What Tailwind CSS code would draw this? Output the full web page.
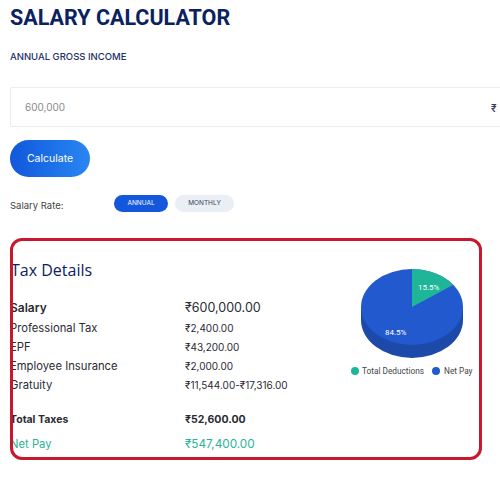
<!DOCTYPE html>
<html lang="en">
<head>
  <meta charset="UTF-8" />
  <title>Salary Calculator</title>
  <script src="https://cdn.jsdelivr.net/npm/@tailwindcss/browser@4"></script>
</head>
<body class="relative w-[500px] h-[477px] overflow-hidden bg-white font-['Inter',sans-serif] text-[#2b2b33]">

  <main class="pl-[10px] pt-[5px]">
    <h1 class="h-[26px] text-[21.5px] leading-[26px] font-bold font-['Roboto',sans-serif] text-[#0b2260]">SALARY CALCULATOR</h1>
    <p class="mt-[19px] h-[14px] text-[9.5px] leading-[14px] font-medium text-[#1c2f66]">ANNUAL GROSS INCOME</p>

    <!-- Income input -->
    <div class="mt-[23px] w-[500px] h-[40px] border border-[#ececec] rounded-[2px] flex items-center pl-[14px] text-[10px] text-[#8a8a8a]">
      600,000
      <span class="absolute left-[491px] top-[102px] text-[10px] leading-[12px] font-semibold text-[#3a3a5a]">₹</span>
    </div>

    <button class="mt-[13px] block w-[80px] h-[37px] rounded-full bg-gradient-to-r from-[#1257dc] to-[#2a86f2] text-white text-[10.5px]">Calculate</button>

    <!-- Salary rate -->
    <div class="mt-[18px] flex items-center h-[17px]">
      <span class="w-[104px] pt-[6px] text-[9.5px] text-[#444]">Salary Rate:</span>
      <span class="w-[54px] h-[17px] rounded-full bg-[#1257dc] text-white text-[6.5px] flex items-center justify-center">ANNUAL</span>
      <span class="ml-[7px] w-[59px] h-[17px] rounded-full bg-[#eaeef5] text-[#3a3f55] text-[6.5px] flex items-center justify-center">MONTHLY</span>
    </div>

    <!-- Tax details -->
    <section class="mt-[47px] flex">
      <div class="w-[330px]">
        <h2 class="h-[22px] pl-[1px] text-[16px] leading-[22px] font-['Open_Sans',sans-serif] text-[#0b2260]">Tax Details</h2>
        <div class="mt-[17px] grid grid-cols-[175px_165px] items-center">
          <div class="h-[21px] leading-[20px] text-[12px] font-semibold">Salary</div>
          <div class="h-[21px] leading-[20px] text-[12.5px]">₹600,000.00</div>
          <div class="h-[19px] leading-[19px] text-[11.25px]">Professional Tax</div>
          <div class="h-[19px] leading-[19px] text-[10px]">₹2,400.00</div>
          <div class="h-[19px] leading-[19px] text-[11.25px]">EPF</div>
          <div class="h-[19px] leading-[19px] text-[10px]">₹43,200.00</div>
          <div class="h-[19px] leading-[19px] text-[11.25px]">Employee Insurance</div>
          <div class="h-[19px] leading-[19px] text-[10px]">₹2,000.00</div>
          <div class="h-[19px] leading-[19px] text-[11.25px]">Gratuity</div>
          <div class="h-[19px] leading-[19px] text-[10px]">₹11,544.00-₹17,316.00</div>
          <div class="mt-[15px] h-[19px] leading-[19px] text-[10.5px] font-bold">Total Taxes</div>
          <div class="mt-[15px] h-[19px] leading-[19px] text-[10.5px] font-bold">₹52,600.00</div>
          <div class="mt-[5px] h-[20px] leading-[20px] text-[11.25px] text-[#2bb39a]">Net Pay</div>
          <div class="mt-[5px] h-[20px] leading-[20px] text-[11.75px] text-[#2bb39a]">₹547,400.00</div>
        </div>
      </div>

      <!-- Pie chart -->
      <div class="w-[140px] mt-[9px]">
        <svg width="140" height="96" viewBox="340 268 140 96" class="block">
          <path d="M361 307 V320 A51 38 0 0 0 463 320 V307 Z" fill="#1d4aa8" />
          <ellipse cx="412" cy="307" rx="51" ry="38" fill="#2259cf" />
          <path d="M412 307 V269 A51 38 0 0 1 453 285 Z" fill="#1fb598" />
          <text x="418" y="290" fill="#fff" font-size="8" font-family="Roboto">15.5%</text>
          <text x="385" y="335" fill="#fff" font-size="8" font-family="Roboto">84.5%</text>
        </svg>
        <div class="mt-[1px] ml-[11px] flex items-center whitespace-nowrap text-[8.25px] font-['Roboto',sans-serif] text-[#444]">
          <span class="w-[8px] h-[8px] rounded-full bg-[#1fb598]"></span>
          <span class="ml-[3px] w-[70px]">Total Deductions</span>
          <span class="w-[8px] h-[8px] rounded-full bg-[#2259cf]"></span>
          <span class="ml-[4px]">Net Pay</span>
        </div>
      </div>
    </section>
  </main>

  <!-- Red annotation box drawn over the screenshot -->
  <div class="absolute left-[10px] top-[238px] w-[472px] h-[222px] border-[3px] border-[#c8182e] rounded-[12px]"></div>

</body>
</html>
